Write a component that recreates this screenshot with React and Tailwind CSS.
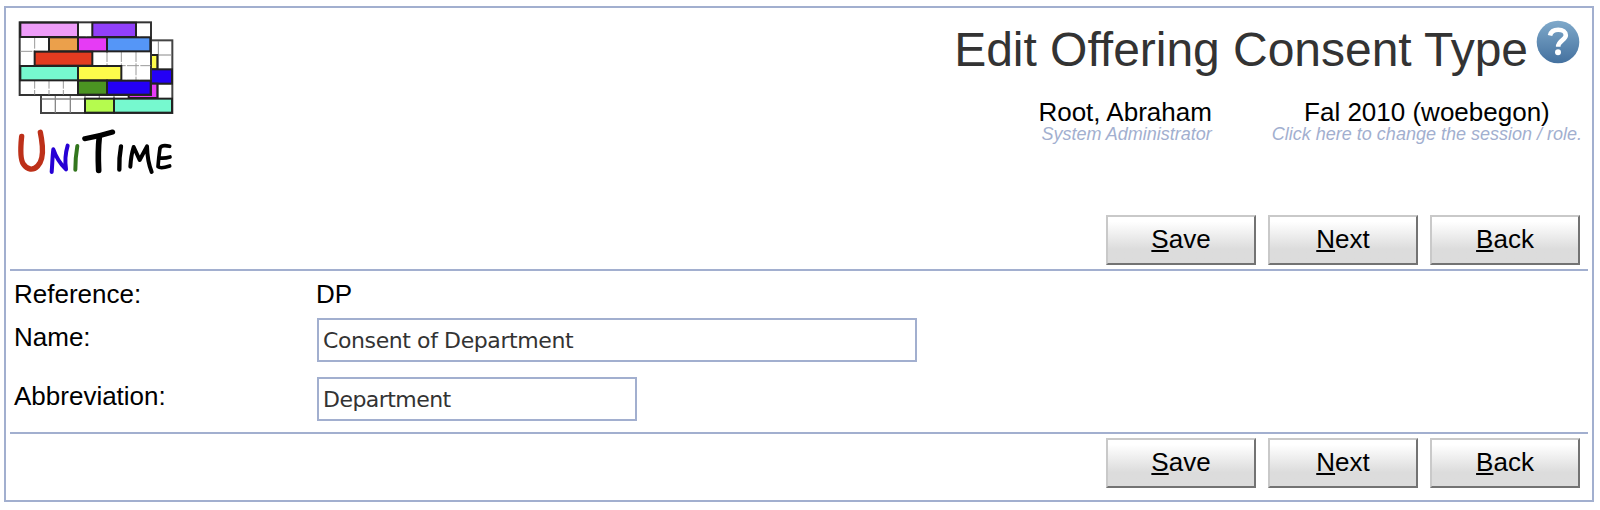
const blocks = [
  [61, 68, 173, 43, '#ee9cf8'],
  [277, 68, 131, 43, '#9140fa'],
  [147, 112, 87, 42, '#eba04b'],
  [234, 112, 87, 42, '#e63bf5'],
  [321, 112, 130, 42, '#5596f7'],
  [104, 155, 173, 42, '#e33b20'],
  [61, 198, 173, 43, '#76f9cf'],
  [234, 198, 130, 43, '#fdfb4b'],
  [234, 242, 87, 42, '#4b9422'],
  [321, 242, 131, 42, '#2400f5'],
];

function Logo() {
  return (
    <svg className="h-[160px] w-[162px]" viewBox="45 54 486 480" fill="none" aria-label="UniTime">
      <rect x="123" y="121" width="394" height="218" fill="#fff" stroke="#444" strokeWidth="6" />
      <path d="M475 123v215M453 165h63M453 252h63" stroke="#888" strokeWidth="3" />
      <path d="M125 297h390M166 288v50M211 288v50M255 288v50M298 288v12M342 288v12" stroke="#888" strokeWidth="4" />
      <g stroke="#222" strokeWidth="6">
        <rect x="430" y="165" width="42" height="43" fill="#fdfb4b" />
        <rect x="430" y="208" width="86" height="43" fill="#2400f5" />
        <rect x="386" y="251" width="86" height="43" fill="#e63bf5" />
        <rect x="255" y="296" width="87" height="42" fill="#b5fb4e" />
        <rect x="342" y="296" width="174" height="42" fill="#76f9cf" />
      </g>
      <rect x="59" y="67" width="394" height="218" fill="#fff" stroke="#333" strokeWidth="6" />
      <g stroke="#999" strokeWidth="3">
        <path d="M104 70v214M147 70v214M190 70v214M234 70v214M277 70v214M321 70v214M364 70v214M408 70v214" strokeDasharray="36 4" />
        <path d="M61 111h391M61 154h391M61 197h391M61 241h391" strokeDasharray="36 4" />
      </g>
      <g stroke="#222" strokeWidth="6">
        {blocks.map(([x, y, w, h, c]) => (
          <rect key={`${x}-${y}`} x={x} y={y} width={w} height={h} fill={c} />
        ))}
      </g>
      <g strokeLinecap="round" strokeLinejoin="round">
        <path d="M65 409C61 448 60 478 70 492C82 510 99 512 113 498C127 484 129 464 127 438Q125 415 121 397" stroke="#bd3019" strokeWidth="16" />
        <path d="M155 516C157 494 157 472 160 448C168 471 180 491 198 508C194 481 197 457 203 437" stroke="#2600d5" strokeWidth="12" />
        <path d="M232 438Q226 473 226 509" stroke="#33761d" strokeWidth="12" />
        <g stroke="#000">
          <path d="M254 416Q297 409 338 396" strokeWidth="15" />
          <path d="M298 409Q293 455 296 511" strokeWidth="17" />
          <path d="M363 439Q357 472 358 509" strokeWidth="13" />
          <path d="M391 500Q393 466 401 441L419 480L441 439Q442 483 455 516" strokeWidth="12" />
          <path d="M509 439Q486 433 480 444Q476 472 474 500Q482 507 509 498M480 474Q494 476 510 471" strokeWidth="11" />
        </g>
      </g>
    </svg>
  );
}

function HelpIcon() {
  return (
    <svg className="mt-[12px] ml-[8px] h-[44px] w-[44px] shrink-0" viewBox="0 0 44 44" fill="none">
      <defs>
        <linearGradient id="help" x1="0" y1="0" x2="0" y2="1">
          <stop offset="0" stopColor="#7fa9ca" />
          <stop offset="1" stopColor="#44719f" />
        </linearGradient>
      </defs>
      <circle cx="22" cy="22" r="21.3" fill="url(#help)" />
      <path d="M14 15.5C15 11.5 18 9.8 22.2 9.8C27 9.8 29.8 12 29.8 15.3C29.8 20 22.2 20.5 22.2 26.8" stroke="#fff" strokeWidth="4.6" />
      <circle cx="22" cy="32.2" r="3" fill="#fff" />
    </svg>
  );
}

function ActionButton({ label }) {
  return (
    <button className="flex h-[50px] w-[150px] items-center justify-center border-2 border-t-[#c9c9c9] border-r-[#737373] border-b-[#737373] border-l-[#c9c9c9] bg-linear-to-b from-white from-10% to-[#dcdcdc] to-70% text-[26px] leading-[30px]">
      <span className="-mt-[3px]">
        <span className="underline decoration-2 underline-offset-[2px] [text-decoration-skip-ink:none]">{label[0]}</span>
        {label.slice(1)}
      </span>
    </button>
  );
}

function Actions() {
  return (
    <div className="flex justify-end gap-3 pr-2">
      <ActionButton label="Save" />
      <ActionButton label="Next" />
      <ActionButton label="Back" />
    </div>
  );
}

export default function App() {
  return (
    <div className="h-[510px] bg-white pt-[6px] pl-1 font-['Liberation_Sans',Arial,sans-serif] text-[26px] leading-[30px] text-black">
      <main className="h-[496px] w-[1590px] border-2 border-[#a2afcf] px-1">
        <header className="flex h-[207px] justify-between pl-[5px]">
          <div className="pt-[10px]">
            <Logo />
          </div>
          <div className="flex flex-col items-end">
            <div className="flex pr-[8px]">
              <h1 className="pt-[14px] text-[48px] leading-[56px] tracking-[-0.03px] whitespace-nowrap text-[#333]">Edit Offering Consent Type</h1>
              <HelpIcon />
            </div>
            <div className="mt-[19px] flex gap-[60px] pr-[6px]">
              <div className="text-right">
                <div>Root, Abraham</div>
                <div className="-mt-[3px] text-[18px] leading-[20px] text-[#a2afcf] italic">System Administrator</div>
              </div>
              <div className="text-center">
                <div>Fal 2010 (woebegon)</div>
                <div className="-mt-[3px] text-[18px] leading-[20px] text-[#a2afcf] italic">Click here to change the session / role.</div>
              </div>
            </div>
          </div>
        </header>
        <Actions />
        <section className="mt-1 mb-1 h-[165px] border-y-2 border-[#a2afcf]">
          <div className="flex h-[47px] pt-[8px] pl-1">
            <div className="w-[303px]">Reference:</div>
            <div className="-ml-px">DP</div>
          </div>
          <div className="flex h-[59px] pl-1">
            <label htmlFor="name" className="w-[303px] pt-[4px]">Name:</label>
            <input id="name" defaultValue="Consent of Department" className="h-[44px] w-[600px] border-2 border-[#a2afcf] px-1 font-['DejaVu_Sans',Verdana,sans-serif] text-[22px] tracking-[-0.4px] text-[#333]" />
          </div>
          <div className="flex pl-1">
            <label htmlFor="abbreviation" className="w-[303px] pt-[4px]">Abbreviation:</label>
            <input id="abbreviation" defaultValue="Department" className="h-[44px] w-[320px] border-2 border-[#a2afcf] px-1 font-['DejaVu_Sans',Verdana,sans-serif] text-[22px] tracking-[-0.55px] text-[#333]" />
          </div>
        </section>
        <Actions />
      </main>
    </div>
  );
}
